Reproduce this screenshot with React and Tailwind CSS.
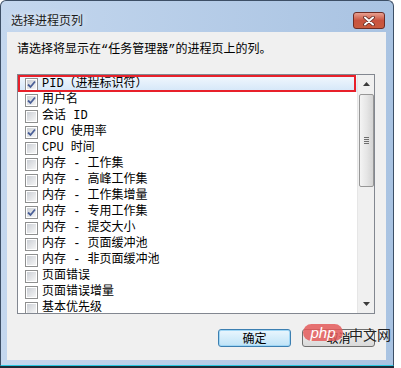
import React from 'react';

const ITEMS = [
  ['PID（进程标识符）', true],
  ['用户名', true],
  ['会话 ID', false],
  ['CPU 使用率', true],
  ['CPU 时间', false],
  ['内存 - 工作集', false],
  ['内存 - 高峰工作集', false],
  ['内存 - 工作集增量', false],
  ['内存 - 专用工作集', true],
  ['内存 - 提交大小', false],
  ['内存 - 页面缓冲池', false],
  ['内存 - 非页面缓冲池', false],
  ['页面错误', false],
  ['页面错误增量', false],
  ['基本优先级', false],
];

const FONT = "font-['Liberation_Mono','Noto_Sans_CJK_SC',monospace]";

const CheckBox = ({ checked }) => (
  <div className="w-[13px] h-[13px] border border-[#8e8f8f] bg-white p-px shrink-0">
    <div className="w-full h-full bg-gradient-to-br from-[#cbcfd5] to-[#f6f6f6] flex items-center justify-center">
      {checked && (
        <svg width="9" height="9" viewBox="0 0 9 9">
          <path d="M1 4.5 L3.5 7 L8 1.5" fill="none" stroke="#4a5f97" strokeWidth="1.8" />
        </svg>
      )}
    </div>
  </div>
);

const ScrollBar = () => (
  <div className="w-[17px] h-full bg-[#f0f0f0] border-l border-[#e6e6e6] flex flex-col items-center">
    <div className="h-[18px] w-full flex items-center justify-center">
      <svg width="7" height="4" viewBox="0 0 7 4"><path d="M0 4 L3.5 0 L7 4 Z" fill="#3b3b3b" /></svg>
    </div>
    <div className="mt-px w-[15px] h-[93px] rounded-[2px] border border-[#979797] bg-gradient-to-r from-[#f4f4f4] via-[#e6e6e6] to-[#d4d4d4] flex flex-col items-center justify-center gap-px">
      <div className="w-[5px] h-px bg-[#6e6e6e]" />
      <div className="w-[5px] h-px bg-[#6e6e6e]" />
      <div className="w-[5px] h-px bg-[#6e6e6e]" />
      <div className="w-[5px] h-px bg-[#6e6e6e]" />
    </div>
    <div className="flex-1" />
    <div className="h-[18px] w-full flex items-center justify-center">
      <svg width="7" height="4" viewBox="0 0 7 4"><path d="M0 0 L3.5 4 L7 0 Z" fill="#3b3b3b" /></svg>
    </div>
  </div>
);

export default function App() {
  return (
    <div className="w-[401px] h-[368px] bg-white overflow-hidden">
      <div className="w-[394px] flex flex-col">
        <div className="h-[366px] rounded-t-[6px] border border-[#3d4f66] border-b-[#27c7e0] bg-gradient-to-r from-[#c4d7ee] to-[#a9c3e2] flex flex-col pl-[6px] pr-[7px] pb-[5px]">
          <div className="h-[31px] flex items-center justify-between pt-[6px]">
            <span className="pl-[4px] text-[12px] text-[#1b1b1b] font-['Noto_Sans_CJK_SC',sans-serif] [text-shadow:0_0_6px_#ffffff]">
              选择进程页列
            </span>
            <div className="w-[32px] h-[17px] mr-[1px] mt-[2px] rounded-[3px] border border-[#6e2c24] bg-gradient-to-b from-[#e8a091] via-[#c8533f] to-[#c95b3e] flex items-center justify-center">
              <svg width="12" height="10" viewBox="0 0 12 10">
                <path d="M2 1.5 L10 8.5 M10 1.5 L2 8.5" stroke="#5b2a24" strokeWidth="3.6" strokeLinecap="round" />
                <path d="M2 1.5 L10 8.5 M10 1.5 L2 8.5" stroke="#ffffff" strokeWidth="2" strokeLinecap="round" />
              </svg>
            </div>
          </div>
          <div className="flex-1 bg-[#f0f0f0] px-[10px] pt-[10px] flex flex-col">
            <p className={`text-[12px] leading-[16px] text-black ${FONT}`}>
              请选择将显示在“任务管理器”的进程页上的列。
            </p>
            <div className="mt-[16px] w-[358px] h-[240px] border border-[#828790] bg-white flex relative">
              <div className="flex-1 overflow-hidden pt-px">
                {ITEMS.map(([label, checked], i) => (
                  <div
                    key={label}
                    className={`h-[16px] flex items-center gap-[4px] pl-[7px] ${i === 0 ? 'bg-gradient-to-b from-[#f1f7fd] to-[#d3e6f8]' : ''}`}
                  >
                    <CheckBox checked={checked} />
                    <span className={`text-[12px] leading-[16px] text-black whitespace-pre ${FONT}`}>{label}</span>
                  </div>
                ))}
              </div>
              <ScrollBar />
              <div className="absolute left-0 top-0 w-[338px] h-[17px] border-2 border-[#e8202a]" />
            </div>
            <div className="mt-[15px] flex justify-end items-start gap-[11px] pr-[1px]">
              <button className="block w-[73px] h-[18px] rounded-[3px] border border-[#3c7fb1] bg-gradient-to-b from-[#eaf6fd] to-[#bfe3f7] shadow-[inset_0_0_0_1px_#9fd6f5] text-[12px] leading-none text-black font-['Noto_Sans_CJK_SC',sans-serif]">
                确定
              </button>
              <div className="relative h-[18px]">
                <button className="block w-[73px] h-[18px] rounded-[3px] border border-[#707070] bg-gradient-to-b from-[#f2f2f2] to-[#d9d9d9] text-[12px] leading-none text-black font-['Noto_Sans_CJK_SC',sans-serif]">
                  取消
                </button>
                <div className="absolute left-[1px] -top-[5px] w-[40px] h-[17px] rounded-full bg-[#e45a5a]/85 flex items-center justify-center">
                  <span className="text-[15px] leading-none italic text-white font-['Liberation_Sans',sans-serif]">php</span>
                </div>
                <span className="absolute left-[47px] -top-[2px] whitespace-nowrap text-[14px] leading-none text-[#222] font-['Noto_Sans_CJK_SC',sans-serif]">中文网</span>
              </div>
            </div>
          </div>
        </div>
        <div className="h-[2px] bg-[#1e2a36]" />
      </div>
    </div>
  );
}
